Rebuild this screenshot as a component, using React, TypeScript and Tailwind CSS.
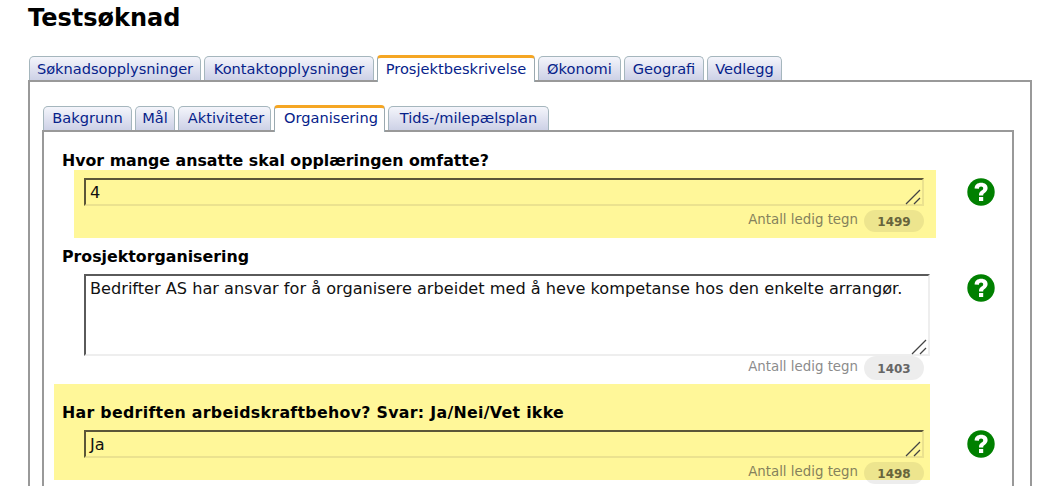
const font = { fontFamily: '"DejaVu Sans", Verdana, sans-serif' };

function Tab({ label, active, w, outer }: { label: string; active?: boolean; w: string; outer?: boolean }) {
  if (active) {
    return (
      <div className={`${w} ${outer ? 'pt-[1px]' : ''} relative -mb-[2px] flex h-[27px] items-start justify-center rounded-t-[4px] border-x border-t-[3px] border-x-[#9aa9b0] border-t-[#f5a623] bg-white text-[14.6px] leading-[20px] text-[#06228a]`}>
        {label}
      </div>
    );
  }
  return (
    <div className={`${w} ${outer ? 'pt-[2px]' : 'pt-[1px]'} flex h-[24px] items-start justify-center rounded-t-[5px] border-x border-t border-[#a5b6bd] bg-gradient-to-b from-[#f4f5fb] to-[#cdd1e6] text-[14.6px] leading-[20px] text-[#06228a]`}>
      {label}
    </div>
  );
}

function Field({ value, h, w, light }: { value: string; h: string; w: string; light?: boolean }) {
  return (
    <div className={`relative ${w} ${h}`}>
      <textarea
        readOnly
        value={value}
        style={font}
        className={`block h-full w-full resize-none border-2 bg-transparent px-[4px] pb-[1px] pt-[3px] text-[16.15px] leading-[20px] text-[#111] outline-none ${
          light
            ? 'border-t-[#5a5a5a] border-l-[#5a5a5a] border-r-[#eeeeee] border-b-[#eeeeee]'
            : 'border-t-[#5b5638] border-l-[#5b5638] border-r-[#ebe28f] border-b-[#ebe28f]'
        }`}
      />
      <svg className="absolute bottom-[1px] right-[2px]" width="17" height="17" viewBox="0 0 17 17" stroke="#444" strokeWidth="1.2" fill="none">
        <path d="M1 16 L15 2" />
        <path d="M9 16 L15 10" />
      </svg>
    </div>
  );
}

function Counter({ n, light, w }: { n: number; light?: boolean; w: string }) {
  return (
    <div className={`flex ${w} items-center justify-end gap-[6px]`}>
      <span className={`text-[13.35px] leading-[16px] ${light ? 'mb-[1px] text-[#8c8c8c]' : 'mb-[2px] text-[#85825c]'}`}>Antall ledig tegn</span>
      <span className={`-mb-[1px] flex w-[60px] items-center justify-center rounded-full pt-[2px] text-[12px] font-bold ${light ? 'h-[24px] bg-[#00000012] text-[#666666]' : 'h-[22px] bg-[#00000012] text-[#67643c]'}`}>
        {n}
      </span>
    </div>
  );
}

function Help({ top }: { top: string }) {
  return (
    <div className={`${top} shrink-0`}>
      <svg width="28" height="28" viewBox="0 0 28 28">
        <circle cx="14" cy="14" r="13.7" fill="#008000" />
        <path d="M7.6 10.6 C7.6 6.9 10.4 4.8 14.2 4.8 C18 4.8 20.6 6.9 20.6 10.1 C20.6 12.5 19.3 13.7 17.6 14.9 C16.5 15.6 16.2 16.2 16.2 17.6 L12 17.6 C11.9 15.2 12.6 13.8 14.2 12.7 C15.6 11.8 16.2 11.3 16.2 10.4 C16.2 9.3 15.4 8.6 14.1 8.6 C12.8 8.6 12 9.4 11.9 10.8 Z" fill="#fff" />
        <rect x="12" y="19" width="4.2" height="4" fill="#fff" />
      </svg>
    </div>
  );
}

export default function App() {
  return (
    <div style={font} className="h-[486px] w-[1058px] overflow-hidden bg-white pl-[28px] text-black">
      <h1 className="h-[53px] pt-[3px] text-[24px] font-bold leading-[30px]">Testsøknad</h1>

      <div className="flex h-[27px] items-end gap-[3px] pl-[1px]">
        <Tab outer w="w-[172px]" label="Søknadsopplysninger" />
        <Tab outer w="w-[170px]" label="Kontaktopplysninger" />
        <Tab outer w="w-[158px]" active label="Prosjektbeskrivelse" />
        <Tab outer w="w-[83px]" label="Økonomi" />
        <Tab outer w="w-[80px]" label="Geografi" />
        <Tab outer w="w-[75px]" label="Vedlegg" />
      </div>

      <div className="h-[420px] w-[1004px] border-x-2 border-t-2 border-[#999999] pl-[12px] pr-[16px] pt-[21px]">
        <div className="flex h-[27px] items-end gap-[3px] pl-[1px]">
          <Tab w="w-[89px]" label="Bakgrunn" />
          <Tab w="w-[40px]" label="Mål" />
          <Tab w="w-[93px] pl-[3px]" label="Aktiviteter" />
          <Tab w="w-[111px] pl-[3px]" active label="Organisering" />
          <Tab w="w-[161px]" label="Tids-/milepælsplan" />
        </div>

        <div className="h-[400px] border-x-2 border-t-2 border-[#999999] pt-[19px]">
          <div className="flex gap-[31px]">
            <div className="w-[892px] shrink-0">
              <div className="h-[19px] pl-[18px] text-[15.8px] font-bold leading-[19px]">Hvor mange ansatte skal opplæringen omfatte?</div>
              <div className="ml-[30px] h-[68px] w-[862px] bg-[#fff799] pl-[10px] pr-[12px] pt-[8px]">
                <Field value="4" w="w-full" h="h-[28px]" />
                <div className="mt-[4px]"><Counter n={1499} w="w-full" /></div>
              </div>
            </div>
            <Help top="pt-[27px]" />
          </div>

          <div className="mt-[9px] flex gap-[31px]">
            <div className="w-[892px] shrink-0">
              <div className="h-[27px] pl-[18px] text-[15.8px] font-bold leading-[19px]">Prosjektorganisering</div>
              <div className="ml-[40px] w-[846px]">
                <Field light value="Bedrifter AS har ansvar for å organisere arbeidet med å heve kompetanse hos den enkelte arrangør." w="w-full" h="h-[82px]" />
                <div className="h-[24px] pr-[6px]"><Counter light n={1403} w="w-full" /></div>
              </div>
            </div>
            <Help top="pt-[27px]" />
          </div>

          <div className="mt-[4px] flex gap-[37px]">
            <div className="w-[886px] shrink-0">
              <div className="ml-[10px] h-[96px] w-[876px] bg-[#fff799] pl-[8px] pt-[19px]">
                <div className="h-[27px] text-[15.8px] font-bold leading-[19px] tracking-[0.3px]">Har bedriften arbeidskraftbehov? Svar: Ja/Nei/Vet ikke</div>
                <div className="ml-[22px] w-[840px]">
                  <Field value="Ja" w="w-full" h="h-[28px]" />
                  <div className="mt-[4px]"><Counter n={1498} w="w-full" /></div>
                </div>
              </div>
            </div>
            <Help top="pt-[46px]" />
          </div>
        </div>
      </div>
    </div>
  );
}
